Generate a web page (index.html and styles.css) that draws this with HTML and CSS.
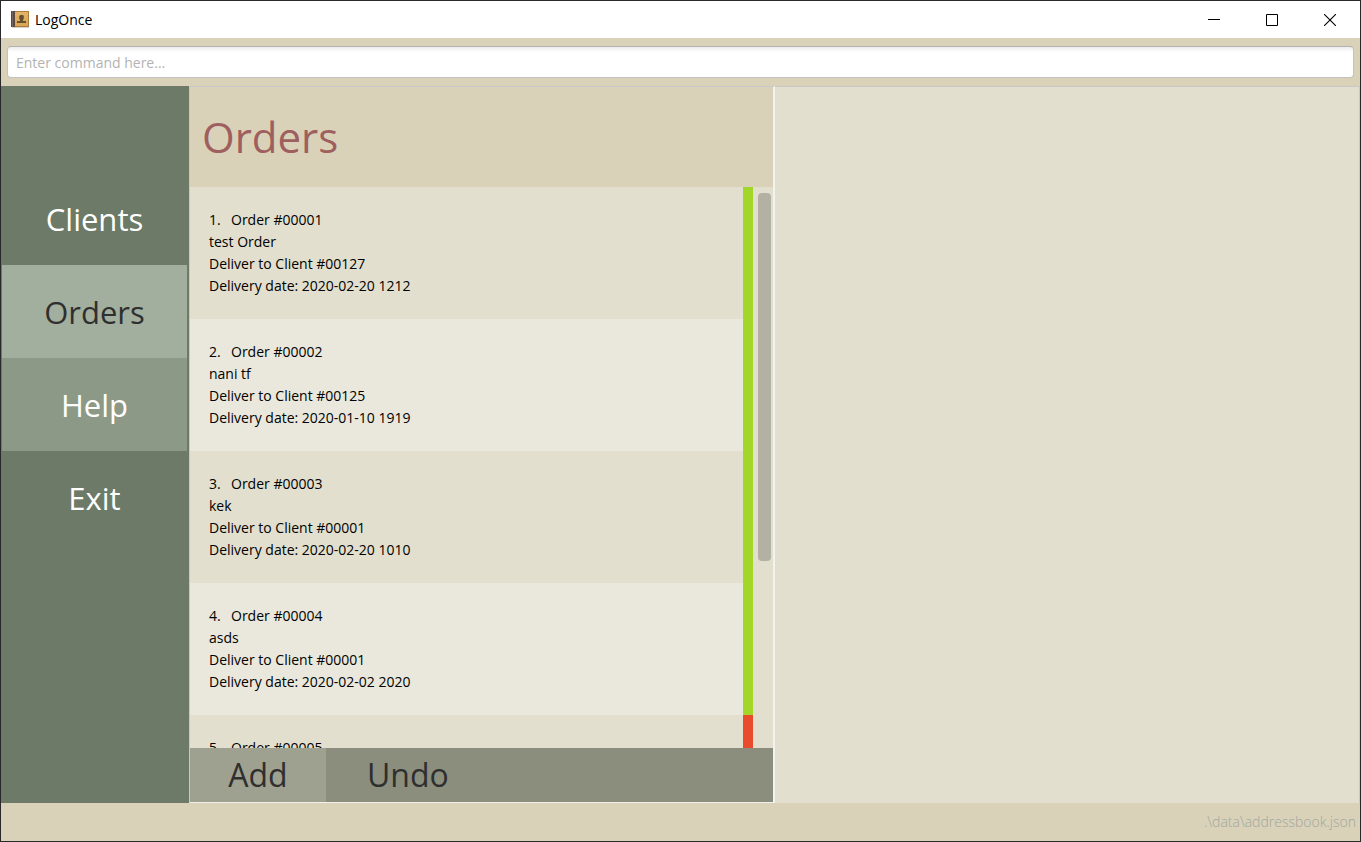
FILE: index.html
```html
<!DOCTYPE html>
<html lang="en">
<head>
<meta charset="utf-8">
<title>LogOnce</title>
<link rel="stylesheet" href="styles.css">
</head>
<body>
<div class="window">
  <header class="titlebar">
    <svg class="app-icon" width="18" height="18" viewBox="0 0 18 18" aria-hidden="true">
      <defs>
        <linearGradient id="cover" x1="0" y1="0" x2="0" y2="1"><stop offset="0" stop-color="#e3b469"/><stop offset="1" stop-color="#d9a555"/></linearGradient>
      </defs>
      <rect x="1" y="16" width="17" height="1" fill="#d5d0c8"/>
      <rect x="3" y="0" width="15" height="16" fill="#a97d3c"/>
      <rect x="4" y="1" width="13" height="14" fill="url(#cover)"/>
      <rect x="0" y="0" width="4" height="16" fill="#5b4a42"/>
      <rect x="1" y="0" width="1" height="16" fill="#75645a"/>
      <path d="M9.500 4h2.500l.8 1v2.500L12 9v1h3v2H6v-2h3V9l-.8-1.500V5z" fill="#65502f"/>
    </svg>
    <h1 class="app-name">LogOnce</h1>
    <div class="window-controls">
      <button class="window-button" aria-label="Minimize"><svg width="12" height="12" viewBox="0 0 12 12"><path d="M0 5.5h12" stroke="#000"/></svg></button>
      <button class="window-button" aria-label="Maximize"><svg width="12" height="12" viewBox="0 0 12 12"><path d="M.5.5h11v11H.5z" fill="none" stroke="#000"/></svg></button>
      <button class="window-button" aria-label="Close"><svg width="12" height="12" viewBox="0 0 12 12"><path d="M0 0l12 12M12 0L0 12" stroke="#000" stroke-width="1.1"/></svg></button>
    </div>
  </header>
  <div class="command-bar">
    <input class="command-input" type="text" aria-label="Command" placeholder="Enter command here...">
  </div>
  <main class="content">
    <nav class="sidebar">
      <button class="nav-button">Clients</button>
      <button class="nav-button nav-selected">Orders</button>
      <button class="nav-button nav-hover">Help</button>
      <button class="nav-button">Exit</button>
    </nav>
    <section class="orders">
      <h2 class="orders-title">Orders</h2>
      <div class="list-area">
        <ol class="order-list">
          <li class="order"><p><span class="index">1.</span>Order #00001</p><p>test Order</p><p>Deliver to Client #00127</p><p>Delivery date: 2020-02-20 1212</p></li>
          <li class="order"><p><span class="index">2.</span>Order #00002</p><p>nani tf</p><p>Deliver to Client #00125</p><p>Delivery date: 2020-01-10 1919</p></li>
          <li class="order"><p><span class="index">3.</span>Order #00003</p><p>kek</p><p>Deliver to Client #00001</p><p>Delivery date: 2020-02-20 1010</p></li>
          <li class="order"><p><span class="index">4.</span>Order #00004</p><p>asds</p><p>Deliver to Client #00001</p><p>Delivery date: 2020-02-02 2020</p></li>
          <li class="order order-late"><p><span class="index">5.</span>Order #00005</p></li>
        </ol>
        <div class="scroll-track"><div class="scroll-thumb"></div></div>
      </div>
      <div class="actions">
        <button class="action action-add">Add</button>
        <button class="action">Undo</button>
      </div>
    </section>
    <section class="details" aria-label="Details"></section>
  </main>
  <footer class="statusbar">.\data\addressbook.json</footer>
</div>
</body>
</html>
```
FILE: styles.css
```css
* {
  box-sizing: border-box;
}

body,
h1,
h2,
p,
ol {
  margin: 0;
  padding: 0;
}

body,
button,
input {
  font-family: "Open Sans", "Noto Sans", sans-serif;
  font-size: 14px;
}

button {
  border: 0;
  padding: 0;
  background: none;
}

.window {
  display: flex;
  flex-direction: column;
  height: 100vh;
  border: 1px solid #29282a;
  background: #d9d2b9;
}

.titlebar {
  display: flex;
  align-items: center;
  height: 37px;
  padding: 0 1px 0 10px;
  background: #fff;
}

.app-name {
  flex: 1;
  padding-left: 6px;
  font-size: 14px;
  font-weight: 400;
}

.window-controls {
  display: flex;
}

.window-button {
  display: flex;
  align-items: center;
  justify-content: center;
  width: 58px;
  height: 37px;
}

.command-bar {
  height: 48px;
  padding: 8px 6px;
}

.command-input {
  display: block;
  width: 100%;
  height: 32px;
  padding: 0 8px;
  border: 1px solid #c4c2bd;
  border-top-color: #b4b3b0;
  border-radius: 4px;
  background: linear-gradient(#ececec, #fff 5px);
}

.command-input::placeholder {
  color: #b3b3b3;
}

.content {
  display: grid;
  flex: 1;
  grid-template-columns: 188px minmax(0, 1fr) minmax(0, 1fr);
  grid-template-rows: minmax(0, 1fr);
  min-height: 0;
}

.sidebar {
  padding: 86px 2px 0 1px;
  background: #6c7a67;
}

.nav-button {
  display: block;
  width: 100%;
  height: 93px;
  color: #fff;
  font-size: 31px;
}

.nav-selected {
  background: #a3af9e;
  color: #2f2f2f;
}

.nav-hover {
  background: #8d9987;
}

.orders {
  display: flex;
  flex-direction: column;
  border: 1px solid #c8c8c8;
  border-right: 2px solid #f2f2f0;
  border-bottom-color: #f0f0ee;
}

.orders-title {
  flex: none;
  height: 100px;
  padding-left: 12px;
  color: #9f5f5f;
  font-size: 42px;
  font-weight: 400;
  line-height: 100px;
}

.list-area {
  display: flex;
  flex: 1;
  min-height: 0;
  background: #e2dfce;
}

.order-list {
  flex: 1;
  overflow: hidden;
  list-style: none;
}

.order {
  height: 132px;
  padding: 22px 19px;
  border-right: 10px solid #a2d729;
  line-height: 22px;
}

.order:nth-child(even) {
  background: #eae8dc;
}

.order-late {
  border-right-color: #e84c2d;
}

.index {
  display: inline-block;
  width: 22px;
}

.scroll-track {
  width: 20px;
  padding: 6px 2px 6px 5px;
}

.scroll-thumb {
  height: 67%;
  border-radius: 4px;
  background: #b3b1a4;
}

.actions {
  display: flex;
  flex: none;
  height: 54px;
  background: #8b8e7d;
}

.action {
  padding: 0 41px;
  color: #2f2f2f;
  font-size: 32px;
  line-height: 54px;
}

.action-add {
  width: 136px;
  padding: 0;
  background: #9fa190;
}

.details {
  border: 1px solid #c8c8c8;
  border-width: 1px 1px 0 0;
  background: #e2dfce;
}

.statusbar {
  height: 38px;
  padding-right: 4px;
  color: #a0a7a0;
  font-weight: 300;
  line-height: 38px;
  text-align: right;
}
```
